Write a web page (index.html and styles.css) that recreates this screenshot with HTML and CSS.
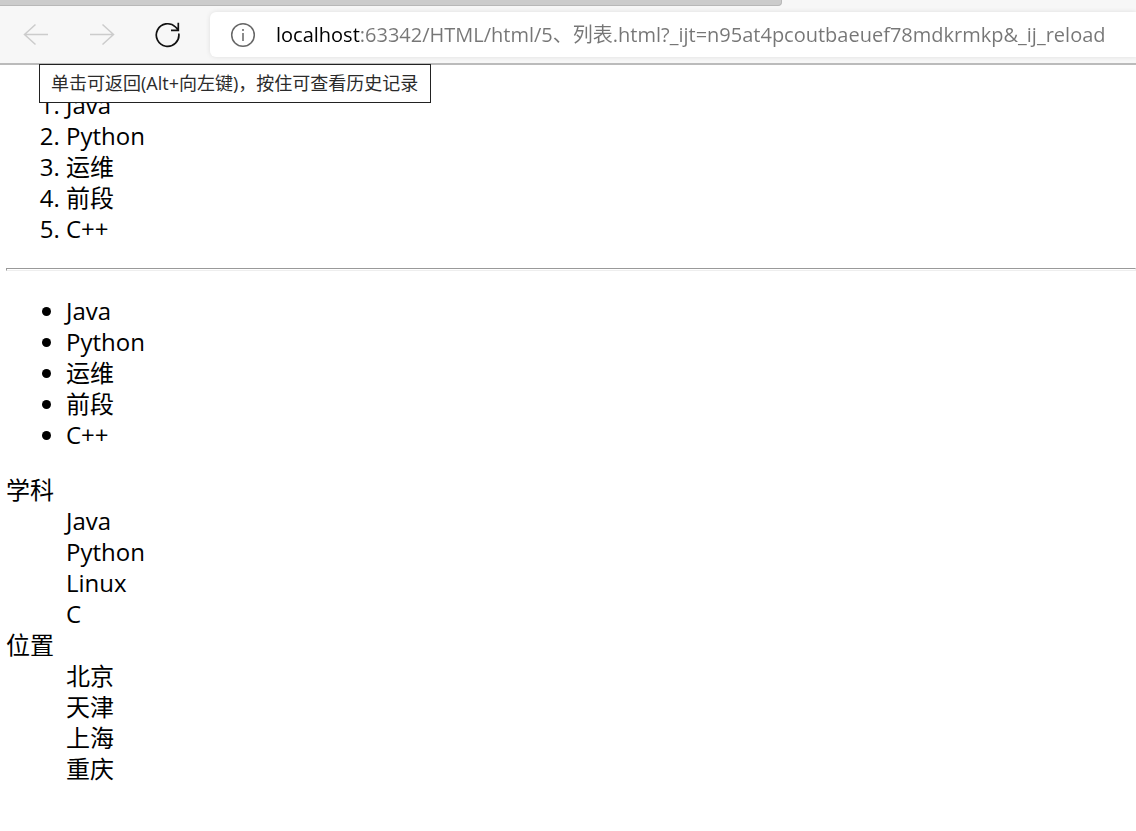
FILE: index.html
```html
<!DOCTYPE html>
<html lang="zh-CN">
<head>
  <meta charset="UTF-8">
  <meta name="viewport" content="width=device-width, initial-scale=1.0">
  <title>列表</title>
  <link rel="stylesheet" href="styles.css">
</head>
<body>
  <header class="browser">
    <div class="tab-strip">
      <div class="tabs"></div>
    </div>
    <div class="toolbar">
      <div class="nav">
        <button class="nav-button" type="button" aria-label="返回" aria-describedby="back-tip" disabled>
          <svg width="26" height="26" viewBox="0 0 26 26" stroke-width="1.500"><path d="M25 12.500H1.500M12.500 2.500L1.500 12.500l11 10"/></svg>
        </button>
        <button class="nav-button" type="button" aria-label="前进" disabled>
          <svg width="26" height="26" viewBox="0 0 26 26" stroke-width="1.500"><path d="M1 12.500h23.500M13.500 2.500l11 10-11 10"/></svg>
        </button>
        <button class="nav-button" type="button" aria-label="刷新">
          <svg width="26" height="26" viewBox="0 0 26 26" stroke-width="1.700"><path d="M23.800 11.500A11.300 11.300 0 1 1 20.500 5L23.300 7.800M23.300 .800v7.500H16"/></svg>
        </button>
      </div>
      <form class="address">
        <button class="site-info" type="button" aria-label="查看站点信息">
          <svg width="26" height="26" viewBox="0 0 26 26" stroke-width="1.500"><circle cx="13" cy="13" r="11.300"/><path d="M13 11v8M13 7v2"/></svg>
        </button>
        <input class="url" type="text" aria-label="地址" value="localhost:63342/HTML/html/5、列表.html?_ijt=n95at4pcoutbaeuef78mdkrmkp&amp;_ij_reload">
      </form>
    </div>
    <div class="tooltip" id="back-tip" role="tooltip">单击可返回(Alt+向左键)，按住可查看历史记录</div>
  </header>

  <main class="page">
    <ol class="list">
      <li>Java</li>
      <li>Python</li>
      <li>运维</li>
      <li>前段</li>
      <li>C++</li>
    </ol>
    <hr class="divider">
    <ul class="list">
      <li>Java</li>
      <li>Python</li>
      <li>运维</li>
      <li>前段</li>
      <li>C++</li>
    </ul>
    <dl class="terms">
      <dt>学科</dt>
      <dd>Java</dd>
      <dd>Python</dd>
      <dd>Linux</dd>
      <dd>C</dd>
      <dt>位置</dt>
      <dd>北京</dd>
      <dd>天津</dd>
      <dd>上海</dd>
      <dd>重庆</dd>
    </dl>
  </main>
</body>
</html>
```

FILE: styles.css
```css
* {
  box-sizing: border-box;
}

body {
  margin: 0;
  background: #fff;
  color: #000;
  font-family: "Open Sans", "Noto Sans CJK SC", sans-serif;
  font-size: 24px;
  line-height: 31px;
}

.browser {
  position: relative;
  background: #f7f7f7;
  border-bottom: 2px solid #bbb;
}

.tab-strip {
  height: 6px;
  padding-right: 354px;
}

.tabs {
  height: 6px;
  background: #ccc;
  border-bottom: 1px solid #b8b8b8;
  border-right: 1px solid #b8b8b8;
  border-bottom-right-radius: 4px;
}

.toolbar {
  display: flex;
  align-items: center;
  padding: 6px 0;
}

.nav {
  display: flex;
  gap: 40px;
  padding: 0 29px 0 23px;
}

.nav-button,
.site-info {
  display: flex;
  padding: 0;
  border: none;
  background: none;
  color: #111;
}

.nav-button:disabled {
  color: #ccc;
}

.browser svg {
  fill: none;
  stroke: currentColor;
}

.address {
  display: flex;
  flex: 1;
  align-items: center;
  gap: 20px;
  height: 45px;
  padding-left: 20px;
  background: #fff;
  border-radius: 6px 0 0 6px;
  box-shadow: 0 0 5px rgba(0, 0, 0, 0.1);
}

.site-info {
  color: #666;
}

.url {
  flex: 1;
  min-width: 0;
  padding: 0;
  border: none;
  outline: none;
  /* the host part is darker than the rest of the address */
  background: linear-gradient(to right, #000 84px, #767676 84px);
  -webkit-background-clip: text;
  background-clip: text;
  -webkit-text-fill-color: transparent;
  color: #767676;
  font: inherit;
  font-size: 20px;
}

.tooltip {
  position: absolute;
  top: 64px;
  left: 39px;
  padding: 4px 12px 4px 11px;
  background: #fff;
  border: 1px solid #222;
  color: #2b2b2b;
  font-size: 18px;
  line-height: 29px;
  white-space: nowrap;
}

.page {
  padding: 0 0 24px 6px;
}

.list {
  margin: 24px 0;
  padding-left: 60px;
}

.divider {
  height: 3px;
  margin: 24px 0;
  border: 1px solid;
  border-color: #999 #eee #eee #999;
}

.terms {
  margin: 24px 0;
}

.terms dd {
  margin-left: 60px;
}
```
